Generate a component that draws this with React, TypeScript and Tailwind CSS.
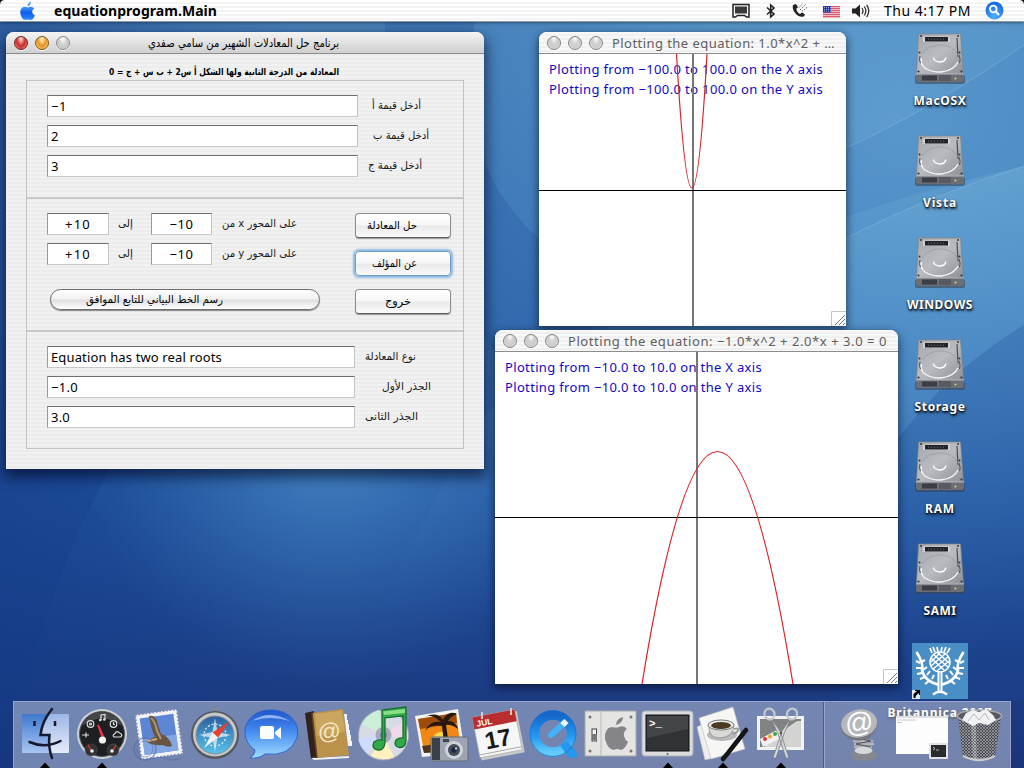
import React, { useLayoutEffect, useRef, useState } from "react";

/* Text set to an exact measure: Latin by tracking, Arabic by horizontal scale. */
function Fit({ w, text, rtl = false, className = "" }: { w: number; text: string; rtl?: boolean; className?: string }) {
  const ref = useRef<HTMLSpanElement>(null);
  const [natural, setNatural] = useState(0);
  useLayoutEffect(() => {
    if (ref.current) setNatural(ref.current.getBoundingClientRect().width);
  }, []);
  const style: React.CSSProperties = !natural
    ? {}
    : rtl
      ? { transform: `scaleX(${w / natural})` }
      : { letterSpacing: `${(w - natural) / text.length}px` };
  return (
    <span className="flex shrink-0 items-start justify-start" style={{ width: w }} dir="ltr">
      <span
        ref={ref}
        dir={rtl ? "rtl" : "ltr"}
        className={`block shrink-0 origin-left whitespace-nowrap ${rtl ? "font-['DejaVu_Sans',sans-serif]" : "font-['Noto_Sans',sans-serif]"} ${className}`}
        style={style}
      >
        {text}
      </span>
    </span>
  );
}

function Wallpaper() {
  return (
    <svg className="absolute inset-0" width="1024" height="768" viewBox="0 0 1024 768">
      <defs>
        <linearGradient id="sky" x1="0" y1="0" x2="0" y2="1">
          <stop offset="0" stopColor="#4a82ba" />
          <stop offset="0.3" stopColor="#3a72b4" />
          <stop offset="0.62" stopColor="#2559a6" />
          <stop offset="0.85" stopColor="#1c4089" />
          <stop offset="1" stopColor="#1b3479" />
        </linearGradient>
        <radialGradient id="glowR" cx="900" cy="130" r="540" gradientUnits="userSpaceOnUse">
          <stop offset="0" stopColor="#68a8d6" stopOpacity="0.75" />
          <stop offset="0.5" stopColor="#5b9fd2" stopOpacity="0.5" />
          <stop offset="1" stopColor="#4080c0" stopOpacity="0" />
        </radialGradient>
        <linearGradient id="darkL" x1="0" y1="0" x2="1" y2="0">
          <stop offset="0" stopColor="#123a86" stopOpacity="0.5" />
          <stop offset="1" stopColor="#123a86" stopOpacity="0" />
        </linearGradient>
        <linearGradient id="fadeDown" x1="0" y1="0" x2="0" y2="1">
          <stop offset="0" stopColor="#78b8de" stopOpacity="0.34" />
          <stop offset="0.75" stopColor="#4080c0" stopOpacity="0" />
        </linearGradient>
        <radialGradient id="glowM" cx="330" cy="440" r="250" gradientUnits="userSpaceOnUse">
          <stop offset="0" stopColor="#5aa2d6" stopOpacity="0.6" />
          <stop offset="1" stopColor="#3a78b8" stopOpacity="0" />
        </radialGradient>
      </defs>
      <rect width="1024" height="768" fill="url(#sky)" />
      <rect width="300" height="768" fill="url(#darkL)" />
      <rect width="1024" height="768" fill="url(#glowR)" />
      <rect width="1024" height="768" fill="url(#glowM)" />
      <path d="M385 22 Q388 180 480 330 Q520 390 540 400 L540 240 Q450 160 475 22 Z" fill="#2c62a8" opacity="0.4" />
      <path d="M325 768 Q390 560 485 414 Q700 240 1024 166 L1024 768 Z" fill="url(#fadeDown)" />
      <path d="M846 238 Q930 195 1024 166 L1024 45 Q930 110 846 148 Z" fill="#3470b6" opacity="0.14" />
      <path d="M846 238 Q930 195 1024 166 M846 148 Q930 110 1024 45" stroke="#9ccbe6" strokeWidth="1" opacity="0.3" fill="none" />
      <path d="M1024 325 Q900 400 840 540 L840 700 L1024 700 Z" fill="#1b4795" opacity="0.25" />
      <path d="M110 468 Q60 560 20 700 L0 700 L0 468 Z" fill="#123a86" opacity="0.25" />
    </svg>
  );
}

function MenuBar() {
  return (
    <header className="relative flex h-[22px] shrink-0 items-center border-b border-[#8b98a8] bg-[repeating-linear-gradient(180deg,#ffffff_0,#ffffff_2px,#f4f4f4_2px,#f4f4f4_4px)] shadow-[0_1px_3px_rgba(0,0,0,0.4)]">
      <svg className="absolute left-0 top-0" width="5" height="5"><path d="M0 0H5Q0 0 0 5Z" /></svg>
      <svg className="absolute right-0 top-0" width="5" height="5"><path d="M5 0H0Q5 0 5 5Z" /></svg>
      <svg className="ml-[19px] mr-[18px] shrink-0" width="17" height="20" viewBox="0 0 17 20">
        <defs><linearGradient id="ap" x1="0" y1="0" x2="0" y2="1"><stop offset="0" stopColor="#7db4f4" /><stop offset="0.45" stopColor="#2b7df0" /><stop offset="0.6" stopColor="#0a5ce8" /><stop offset="1" stopColor="#2e8cff" /></linearGradient></defs>
        <path d="M8.600 5.200C8.600 2.600 10 .9 12 .6 12.200 3 10.700 5 8.600 5.200ZM14.200 6.600C12.400 5 10.300 5.900 9 6.400 7.600 6.300 6.400 5.300 4.400 5.900.5 7.100.5 12.800 3.100 16.900 5.200 19.900 6.600 18.600 8.800 18.400 10.600 18.400 12 20 14 17.800 15 16.600 15.600 15.200 15.900 14.300 12.600 12.800 12.300 8.600 15.400 7.700Z" fill="url(#ap)" />
      </svg>
      <Fit w={163} text="equationprogram.Main" className="text-[14px] leading-5 font-bold text-black" />
      <div className="grow" />
      <svg className="shrink-0" width="20" height="18" viewBox="0 0 20 18">
        <path d="M2 2.500h16v12.500h-2.500l-2-1.500h-7l-2 1.500H2z" fill="#f4f4f4" stroke="#222" strokeWidth="1.500" /><rect x="4" y="4.500" width="12" height="7" fill="#3a3a3a" />
      </svg>
      <svg className="ml-[14px] shrink-0" width="12" height="16" viewBox="0 0 12 16">
        <path d="M2 4.500 9 11 5.700 14V2L9 5 2 11.500" fill="none" stroke="#222" strokeWidth="1.600" />
      </svg>
      <svg className="ml-[14px] shrink-0" width="18" height="17" viewBox="0 0 18 17">
        <path d="M2 3C.5 7 5 15.500 12 14.800 13.500 14 14 12.800 13.700 12L10.800 10.500 9 12C6.700 10.800 5.400 9 5.400 6.500L7 5.300 5 2Z" fill="#222" />
        <path d="M9 8 15 2M11 9.500 16.500 5M8 5.500 12 1.500" stroke="#555" strokeWidth="1" strokeDasharray="1.300 1.300" />
      </svg>
      <svg className="ml-[14px] mt-[2px] shrink-0" width="17" height="12" viewBox="0 0 17 12">
        <rect width="17" height="12" fill="#f4e9ec" /><path d="M0 .7h17M0 2.700h17M0 4.700h17M0 6.700h17M0 8.700h17M0 10.800h17" stroke="#d52d3f" strokeWidth="1.100" /><rect width="8" height="6.500" fill="#2335a5" /><path d="M1 1.500h7M1 3.300h7M1 5.100h7" stroke="#dde" strokeWidth=".7" strokeDasharray="1 1" />
      </svg>
      <svg className="ml-[11px] shrink-0" width="20" height="16" viewBox="0 0 20 16">
        <path d="M1 5.500H4.500L9 1.500V14.500L4.500 10.500H1Z" fill="#222" /><path d="M11 5Q13 8 11 11M13.300 3.500Q16.300 8 13.300 12.500M15.700 1.800Q19.800 8 15.700 14.200" fill="none" stroke="#333" strokeWidth="1.300" />
      </svg>
      <div className="ml-[13px]"><Fit w={87} text="Thu 4:17 PM" className="text-[14px] leading-5 text-black" /></div>
      <svg className="ml-[14px] mr-[20px] shrink-0" width="19" height="19" viewBox="0 0 19 19">
        <defs><radialGradient id="sp" cx="0.5" cy="0.8" r="0.8"><stop offset="0" stopColor="#4db0ff" /><stop offset="1" stopColor="#1460e4" /></radialGradient></defs>
        <circle cx="9.500" cy="9.500" r="9" fill="url(#sp)" /><circle cx="8.300" cy="8" r="3.300" fill="none" stroke="white" strokeWidth="1.800" /><path d="M10.800 10.600 14 13.900" stroke="white" strokeWidth="2.200" />
      </svg>
    </header>
  );
}

function Light({ color }: { color: "red" | "amber" | "gray" | "clear" }) {
  const base = "h-[14px] w-[14px] shrink-0 rounded-full border shadow-[0_1px_0_rgba(255,255,255,0.8)] ";
  const fills = {
    red: "border-[#6b2020] bg-[radial-gradient(ellipse_at_50%_15%,#ffe9e4_0,#e8837c_25%,#c62f2f_50%,#f58c80_95%)]",
    amber: "border-[#80511a] bg-[radial-gradient(ellipse_at_50%_15%,#fff6dc_0,#f3c878_25%,#e8912a_50%,#ffe36a_95%)]",
    gray: "border-[#8a8a8a] bg-[radial-gradient(ellipse_at_50%_15%,#ffffff_0,#dadada_35%,#c6c6c6_60%,#f2f2f2_100%)]",
    clear: "border-[#828282] bg-[radial-gradient(ellipse_at_50%_15%,#ffffff_0,#d2d2d2_35%,#cccccc_60%,#fafafa_100%)]",
  };
  return <span className={base + fills[color]} />;
}

function Field({ box, text, fit, center = false }: { box: string; text?: string; fit: number; center?: boolean }) {
  return (
    <div className={`flex h-[22px] shrink-0 items-center border border-t-[#6f6f6f] border-r-[#c4c4c4] border-b-[#c9c9c9] border-l-[#9b9b9b] bg-white ${center ? "justify-center" : "pl-[3px]"} ${box}`}>
      <Fit w={fit} text={text ?? ""} className="text-[13px] leading-5 text-black" />
    </div>
  );
}

function Row({ box, value, fit, label, labelW, gap }: { box: string; value: string; fit: number; label: string; labelW: number; gap: string }) {
  return (
    <div className="flex h-[22px] items-center">
      <Field box={box} text={value} fit={fit} />
      <div className={gap}><Fit rtl w={labelW} text={label} className="text-[11px] leading-5 text-[#1a1a1a]" /></div>
    </div>
  );
}

function RangeRow({ axis }: { axis: string }) {
  return (
    <div className="flex h-[22px] items-center">
      <Field box="w-[62px]" text="+10" fit={26} center />
      <div className="ml-[9px]"><Fit rtl w={15} text="إلى" className="text-[11px] leading-5 text-[#1a1a1a]" /></div>
      <div className="ml-[18px]"><Field box="w-[61px]" text="−10" fit={24} center /></div>
      <div className="ml-[10px]"><Fit rtl w={75} text={`على المحور ${axis} من`} className="text-[11px] leading-5 text-[#1a1a1a]" /></div>
    </div>
  );
}

function PushButton({ text, w, pad, focus = false }: { text: string; w: number; pad: string; focus?: boolean }) {
  return (
    <button
      className={`flex h-[25px] w-[96px] items-center rounded-[4px] border bg-[linear-gradient(180deg,#ffffff_0%,#f6f6f6_48%,#e9e9e9_52%,#fbfbfb_100%)] ${pad} ${
        focus ? "border-[#6d9cc8] shadow-[0_0_2px_2px_rgba(110,168,220,0.75)]" : "border-[#8d8d8d] border-b-[#5c5c5c] shadow-[0_1px_1px_rgba(0,0,0,0.35)]"
      }`}
    >
      <Fit rtl w={w} text={text} className="text-[11px] leading-5 text-black" />
    </button>
  );
}

const stripes = "bg-[repeating-linear-gradient(180deg,#f1f1f1_0,#f1f1f1_2px,#ececec_2px,#ececec_4px)]";

function SolverWindow() {
  return (
    <section className={`absolute left-[6px] top-[32px] flex h-[437px] w-[478px] flex-col rounded-t-[8px] shadow-[0_6px_14px_2px_rgba(0,0,20,0.6)] ${stripes}`}>
      <div className="flex h-[22px] shrink-0 items-center gap-[7px] rounded-t-[8px] border-b border-[#8c8c8c] bg-[linear-gradient(180deg,#f4f4f4,#cfcfcf)] pl-[8px]">
        <Light color="red" /><Light color="amber" /><Light color="gray" />
        <div className="ml-[71px]"><Fit rtl w={191} text="برنامج حل المعادلات الشهير من سامي صفدي" className="text-[12px] leading-5 text-black" /></div>
      </div>
      <div className="flex h-[26px] shrink-0 items-center pl-[103px] pt-[10px]">
        <Fit rtl w={230} text="المعادلة من الدرجة الثانية ولها الشكل أ س2 + ب س + ج = 0" className="text-[9.5px] leading-5 font-bold text-black" />
      </div>
      <div className="ml-[20px] flex h-[369px] w-[438px] flex-col border border-[#c2c2c2]">
        <div className="flex h-[118px] shrink-0 flex-col gap-[8px] border-b-2 border-[#c8c8c8] pl-[20px] pt-[14px]">
          <Row box="w-[311px]" value="−1" fit={16} label="أدخل قيمة أ" labelW={49} gap="ml-[14px]" />
          <Row box="w-[311px]" value="2" fit={8} label="أدخل قيمة ب" labelW={56} gap="ml-[15px]" />
          <Row box="w-[311px]" value="3" fit={8} label="أدخل قيمة ج" labelW={54} gap="ml-[10px]" />
        </div>
        <div className="flex h-[133px] shrink-0 border-b-2 border-[#c8c8c8] pl-[20px] pt-[14px]">
          <div className="flex w-[308px] flex-col gap-[8px]">
            <RangeRow axis="x" />
            <RangeRow axis="y" />
            <button className="ml-[3px] mt-[16px] flex h-[21px] w-[270px] items-center rounded-full border border-[#6e6e6e] bg-[linear-gradient(180deg,#ffffff_0%,#f0f0f0_48%,#dedede_52%,#ffffff_100%)] pl-[35px] shadow-[0_1px_1px_rgba(0,0,0,0.45)]">
              <Fit rtl w={137} text="رسم الخط البياني للتابع الموافق" className="text-[11px] leading-5 text-black" />
            </button>
          </div>
          <div className="flex flex-col gap-[13px]">
            <PushButton text="حل المعادلة" w={50} pad="pl-[11px]" />
            <PushButton text="عن المؤلف" w={45} pad="pl-[16px]" focus />
            <PushButton text="خروج" w={26} pad="pl-[29px]" />
          </div>
        </div>
        <div className="flex flex-col gap-[8px] pl-[20px] pt-[14px]">
          <Row box="w-[308px]" value="Equation has two real roots" fit={171} label="نوع المعادلة" labelW={51} gap="ml-[10px]" />
          <Row box="w-[308px]" value="−1.0" fit={27} label="الجذر الأول" labelW={49} gap="ml-[27px]" />
          <Row box="w-[308px]" value="3.0" fit={19} label="الجذر الثانى" labelW={53} gap="ml-[10px]" />
        </div>
      </div>
    </section>
  );
}

type PlotProps = {
  frame: string; title: string; titleW: number; lines: string[]; lineW: number;
  w: number; h: number; axisX: number; axisY: number; curve: string;
};

function PlotWindow({ frame, title, titleW, lines, lineW, w, h, axisX, axisY, curve }: PlotProps) {
  return (
    <section className={`absolute flex flex-col rounded-t-[8px] bg-white shadow-[0_3px_8px_1px_rgba(0,0,20,0.55)] ${frame}`}>
      <div className="flex h-[22px] shrink-0 items-center gap-[7px] rounded-t-[8px] border-b border-[#8c8c8c] bg-[repeating-linear-gradient(180deg,#f8f8f8_0,#f8f8f8_2px,#f0f0f0_2px,#f0f0f0_4px)] pl-[8px]">
        <Light color="clear" /><Light color="clear" /><Light color="clear" />
        <div className="ml-[2px]"><Fit w={titleW} text={title} className="text-[13px] leading-5 text-[#5e5e5e]" /></div>
      </div>
      <div className="relative grow pl-[10px] pt-[5px]">
        {lines.map((line) => (
          <Fit key={line} w={lineW} text={line} className="text-[13px] leading-5 text-[#1208c8]" />
        ))}
        <svg className="absolute left-0 top-0" width={w} height={h} viewBox={`0 0 ${w} ${h}`}>
          <path d={`M${axisX} 0V${h}`} stroke="#777" strokeWidth="2" />
          <path d={`M0 ${axisY}H${w}`} stroke="#000" strokeWidth="1" />
          <path d={curve} fill="none" stroke="#dd2027" strokeWidth="1.200" />
          <g transform={`translate(${w - 15} ${h - 15})`}>
            <path d="M.5 15V.5H15" fill="#fff" stroke="#c4c4c4" />
            <path d="M4 14 14 4M8 14 14 8M12 14 14 12" stroke="#777" strokeWidth="1" />
          </g>
        </svg>
      </div>
    </section>
  );
}

function Drive() {
  return (
    <svg width="54" height="54" viewBox="0 -1 54 54">
      <defs>
        <linearGradient id="dm" x1="0" y1="0" x2="1" y2="1"><stop offset="0" stopColor="#a6a8ad" /><stop offset="0.5" stopColor="#b9bbc0" /><stop offset="1" stopColor="#8e9096" /></linearGradient>
      </defs>
      <path d="M2 44H52V50Q52 52 50 52H4Q2 52 2 50Z" fill="#3c3f48" opacity=".55" />
      <path d="M5.500 2H47.500L50.500 42H3.500Z" fill="url(#dm)" stroke="#7e8187" strokeWidth=".7" />
      <path d="M3 42H51V48Q51 50 49 50H5Q3 50 3 48Z" fill="#6b6e75" />
      <path d="M9 43.500H24V48.500H9Z" fill="#3b3e44" /><path d="M27 43v6M29 43v6M31 43v6M33 43v6M35 43v6M37 43v6" stroke="#3a3c43" strokeWidth=".8" /><circle cx="42.500" cy="46.500" r="1" fill="#e2e23f" />
      <path d="M3 42H51" stroke="#d4d6da" strokeWidth=".7" />
      <path d="M10 4.500H37V10H10Z" fill="#ced0d4" /><rect x="12" y="5" width="23" height="4.500" fill="#22242a" /><path d="M15 7.200H31" stroke="#777" strokeDasharray="1 2" />
      <path d="M44 6 45 25" stroke="#4a4c52" strokeWidth="1.200" />
      <path d="M8.500 26Q7 32 12 36 19 40.500 28 40 41 38.500 45 30" fill="none" stroke="#f6f6f8" strokeWidth="1.400" />
      <path d="M9 22Q16 12 30 13 44 15 46 27" fill="none" stroke="#92949a" strokeWidth=".6" />
      <path d="M7 24Q5.500 28 7.500 31M46 23Q48 28 46.500 31" stroke="#4f5259" fill="none" strokeWidth="1" />
      <path d="M20.500 25.500Q21 29.500 26.500 30 32 30 33 25.500" fill="none" stroke="#fff" strokeWidth="1.300" />
      <g fill="#34363b"><circle cx="8" cy="4" r="1" /><circle cx="45" cy="4" r="1" /><circle cx="5.500" cy="39.500" r="1.100" /><circle cx="48.500" cy="39.500" r="1.100" /><circle cx="6.500" cy="20.500" r="1" /><circle cx="46.500" cy="20.500" r="1" /></g>
    </svg>
  );
}

function Thistle() {
  return (
    <svg width="56" height="56" viewBox="0 0 56 56">
      <rect width="56" height="56" fill="#4a8ec6" />
      <g fill="none" stroke="#fff">
        <path d="M29.500 28V50M26.500 28V50" strokeWidth="2" /><path d="M21 51.500Q28 46 35 51.500" strokeWidth="2.500" />
        <path d="M27 42Q12 38 10 27 12 21 4.500 9M29 42Q44 38 46 27 44 21 51.500 9" strokeWidth="2.600" />
        <path d="M8 20 4 18M9 25 4 25M10 30 5 31M13 34 8 36M17 38 13 41M9 19 13 17M11 27 15 24M15 32 18 28M20 36 22 32M48 20 52 18M47 25 52 25M46 30 51 31M43 34 48 36M39 38 43 41M47 19 43 17M45 27 41 24M41 32 38 28M36 36 34 32" strokeWidth="2" />
        <path d="M20 10 18 5M23 9 21 4M26 9 25 4M29 9 30 4M32 9 34 4M35 10 38 5" strokeWidth="1.700" />
        <circle cx="28" cy="19" r="10" strokeWidth="1.500" /><path d="M19 19 28 10M19 23 33 11M21 26 36 14M25 28 37 18M19 15 32 27M22 12 36 24M26 10 37 20" strokeWidth="1.500" />
      </g>
      <rect x="0" y="47" width="8" height="9" fill="#dfe9f2" /><path d="M1.500 55V51L5 48H3V47H8V52H7V50Q3.500 52 3.500 55Z" fill="#000" />
    </svg>
  );
}

const drives: [string, number][] = [["MacOSX", 53], ["Vista", 34], ["WINDOWS", 66], ["Storage", 51], ["RAM", 30], ["SAMI", 33]];
const labelClass = "text-[12px] leading-4 font-bold text-white [text-shadow:0_1px_2px_#000,1px_2px_3px_rgba(0,0,0,0.7)]";

function DesktopIcons() {
  return (
    <aside className="absolute left-[880px] top-[31px] flex w-[120px] flex-col items-center">
      {drives.map(([name, w]) => (
        <div key={name} className="flex h-[102px] flex-col items-center gap-[8px]">
          <Drive />
          <Fit w={w} text={name} className={labelClass} />
        </div>
      ))}
      <div className="flex flex-col items-center gap-[6px]">
        <Thistle />
        <Fit w={105} text="Britannica 2007" className={labelClass} />
      </div>
    </aside>
  );
}

const dockIcons: React.ReactNode[] = [
  /* Finder */
  <g>
    <defs><linearGradient id="fa" x1="0" y1="0" x2="0" y2="1"><stop offset="0" stopColor="#3f78cf" /><stop offset="1" stopColor="#a9c4f2" /></linearGradient><linearGradient id="fb" x1="0" y1="0" x2="0" y2="1"><stop offset="0" stopColor="#9db6e6" /><stop offset="1" stopColor="#e6ebfb" /></linearGradient></defs>
    <rect x="5" y="13" width="47" height="39" rx="1" fill="url(#fb)" /><path d="M5 13H33Q25 25 24 35H33Q32 45 34 52H5Z" fill="url(#fa)" />
    <path d="M35 8Q25 20 23.500 34H32.500Q31 46 35 57" fill="none" stroke="#151b2c" strokeWidth="2.500" strokeLinecap="round" /><path d="M12.500 41Q28 48 43.500 40" fill="none" stroke="#151b2c" strokeWidth="2.500" strokeLinecap="round" /><path d="M17.500 20v5M38 20v5" stroke="#151b2c" strokeWidth="2.500" />
  </g>,
  /* Dashboard */
  <g>
    <circle cx="28" cy="33" r="25" fill="#ccd0d6" /><circle cx="28" cy="33" r="22.500" fill="#1e1f22" stroke="#555" />
    <path d="M8 25Q28 10 48 25Q43 12 28 11 13 12 8 25Z" fill="#55585d" opacity=".7" />
    <circle cx="17" cy="49" r="6" fill="#333" stroke="#555" strokeWidth=".6" /><circle cx="39" cy="49" r="6" fill="#333" stroke="#555" strokeWidth=".6" /><path d="M17 49 14 44M39 49 42 44" stroke="#d33" strokeWidth="1.300" /><circle cx="18" cy="50" r="1.800" fill="#eee" /><circle cx="38" cy="50" r="1.800" fill="#eee" />
    <path d="M29 38 24 24 30 37Z" stroke="#f0324d" strokeWidth="1.800" /><circle cx="28.500" cy="39" r="3.600" fill="#f2f2f2" />
    <g fill="none" stroke="#ddd" strokeWidth="1.200"><circle cx="16.500" cy="23" r="3.300" /><circle cx="16.500" cy="23" r="1" /><circle cx="39.500" cy="23" r="3.300" /><path d="M39.500 21v2.500h1.500M8 34h7M12 31.500v5M40 36h7Q49 33 45.500 32 43 29 41 32.500 38 34 40 36ZM27 19V14L31 13.500V18.500" /></g><circle cx="26.300" cy="19" r="1.300" fill="#ddd" /><circle cx="30.300" cy="18.500" r="1.300" fill="#ddd" />
  </g>,
  /* Mail */
  <g>
    <g transform="rotate(-8 28 33)"><path d="M8 11H50V56H8Z" fill="#f4f4f7" /><path d="M8 11H50V56H8Z" fill="none" stroke="#7d88b6" strokeWidth="2" strokeDasharray="1.500 2" /><path d="M12 15H46V52H12Z" fill="#5c86d4" /><path d="M12 36H46V52H12Z" fill="#83a7e2" /></g>
    <path d="M19 15Q26 13 28 24L31 33Q40 36 42 45 38 47 33 44 24 45 17 41 20 37 25 36 21 28 19 15Z" fill="#69543f" /><path d="M21 17Q25 20 27 30L31 38" stroke="#aa987e" strokeWidth="2" fill="none" /><path d="M18 40 27 38" stroke="#d8ae65" strokeWidth="2" />
    <circle cx="15" cy="48" r="11" fill="none" stroke="#5366a2" strokeWidth="1.300" opacity=".6" /><circle cx="15" cy="48" r="8" fill="none" stroke="#5366a2" opacity=".5" /><path d="M22 58Q32 55 38 58T52 56" fill="none" stroke="#5366a2" opacity=".6" />
  </g>,
  /* Safari */
  <g>
    <defs><linearGradient id="sf" x1="0" y1="0" x2="0" y2="1"><stop offset="0" stopColor="#2a5f9f" /><stop offset="1" stopColor="#58c3ea" /></linearGradient></defs>
    <circle cx="28" cy="9.500" r="2.500" fill="none" stroke="#888" strokeWidth="1.600" /><circle cx="28" cy="34" r="24" fill="#55585e" /><circle cx="28" cy="33.500" r="22" fill="#c7cacd" /><circle cx="28" cy="34" r="19" fill="url(#sf)" stroke="#8a8d92" />
    <path d="M28 17 30.500 31 44 34 30.500 37 28 51 25.500 37 12 34 25.500 31Z" fill="#dff1fa" opacity=".75" /><circle cx="28" cy="34" r="11" fill="none" stroke="#e6f6ff" strokeWidth="1.200" strokeDasharray="2 2" /><path d="M25.500 31.500 43 20 31 36.500Z" fill="#e6402f" /><path d="M25.500 31.500 17 47 31 36.500Z" fill="#f1f1f1" />
  </g>,
  /* iChat */
  <g>
    <defs><linearGradient id="ic" x1="0" y1="0" x2="0" y2="1"><stop offset="0" stopColor="#2055cc" /><stop offset="0.45" stopColor="#468cf0" /><stop offset="1" stopColor="#a0dcff" /></linearGradient></defs>
    <path d="M28 9C12 9 2 19 2 31 2 39 6 45 12 49Q12 54 7 57 16 58 22 53 47 56 54 37C58 20 44 9 28 9Z" fill="url(#ic)" stroke="#2a62ce" /><path d="M9 20Q26 8 47 20 28 14 9 20Z" fill="#bcd8ff" opacity=".7" /><rect x="17" y="25" width="14" height="13" rx="2" fill="#fff" /><path d="M32 31 38 26V38L32 33Z" fill="#fff" />
  </g>,
  /* Address Book */
  <g>
    <path d="M5 12 14 10 18 57 11 58Z" fill="#33211d" /><path d="M11 57 49 55V57L14 59Z" fill="#eee" /><path d="M12 12 43 8 49 54 17 57Z" fill="#bb924c" /><path d="M15 13 42 9.500 45 31 17 35Z" fill="#d3b06c" opacity=".65" /><path d="M44 13h3v6h1v4h1v6h1v5h1v6h1v5h-4Z" fill="#f4f4f4" /><path d="M12 12 17 57" stroke="#60421f" strokeWidth="1.500" />
    <text x="18" y="38" fontSize="23" fill="#f3e6c4" fontFamily="Liberation Sans" transform="rotate(-6 31 33)">@</text>
  </g>,
  /* iTunes */
  <g>
    <circle cx="26.500" cy="34" r="25" fill="#d7dce4" stroke="#aab" /><path d="M26.500 34 5 23Q11 12 22 9Z" fill="#ccefda" /><path d="M26.500 34 47 20Q52 30 51 39Z" fill="#f1d9e9" /><path d="M26.500 34 14 55Q26 61 37 56Z" fill="#fff1bf" /><path d="M26.500 34 1.500 38Q3 46 9 51Z" fill="#cbdcff" /><circle cx="26.500" cy="34" r="8" fill="#a4aaba" /><circle cx="26.500" cy="34" r="3.500" fill="#7983ae" />
    <path d="M25 9 49 6V39Q49 47 42 46.500 36 45 39 39 42 36.500 46 37V15L28 17V42Q27 50 20 49 14 47 17 41 21 38 25 39Z" fill="#33a849" stroke="#11682b" strokeWidth="1.200" /><path d="M26 10.500 48 8V12L27 14Z" fill="#88df86" />
  </g>,
  /* iPhoto */
  <g>
    <path d="M2 15 45 8 52 52 9 56Z" fill="#f3f3f1" /><path d="M5 18 43 12 48 48 11 51Z" fill="#f08816" /><path d="M5 18 43 12 44 22 7 28Z" fill="#9d4c0b" /><circle cx="28" cy="39" r="8" fill="#ffd84b" /><path d="M32 50 29 25Q18 23 12 30 17 19 28 21 18 12 12 16 24 10 30 19 35 9 44 13 37 16 35 20 43 20 45 28 38 23 33 24L37 50Z" fill="#271810" />
    <path d="M9 45 48 40V50L11 52Z" fill="#50351d" /><rect x="18" y="36" width="37" height="24" rx="2" fill="#9ea5b0" stroke="#656b78" /><rect x="19" y="37" width="8" height="22" fill="#3c4048" /><circle cx="41" cy="49" r="9" fill="#d0d4da" /><circle cx="41" cy="49" r="6" fill="#454c59" /><circle cx="41" cy="49" r="2.700" fill="#1b2947" /><circle cx="43" cy="47.500" r="1" fill="#fff" /><rect x="30" y="38" width="6" height="3" fill="#444" />
  </g>,
  /* iCal */
  <g>
    <g transform="rotate(-11 28 34)"><rect x="7" y="14" width="44" height="42" fill="#c8c8c8" /><rect x="6" y="12" width="43" height="41" fill="#f6f6f6" stroke="#aaa" strokeWidth=".6" /><path d="M6 12H49V24H6Z" fill="#b92d30" /><path d="M6 50H49" stroke="#aaa" /><text x="9" y="22" fontSize="8.500" fontWeight="bold" fill="#fff" fontFamily="Liberation Sans">JUL</text><text x="14" y="46" fontSize="24" fontWeight="bold" fill="#191919" fontFamily="Liberation Sans">17</text></g>
    <path d="M12 11v7M41 7v7" stroke="#ccc" strokeWidth="2" />
  </g>,
  /* QuickTime */
  <g>
    <defs><linearGradient id="qt" x1="0" y1="0" x2="0" y2="1"><stop offset="0" stopColor="#1467c9" /><stop offset="0.6" stopColor="#249af2" /><stop offset="1" stopColor="#62cafa" /></linearGradient></defs>
    <circle cx="27" cy="32.500" r="18.500" fill="none" stroke="url(#qt)" strokeWidth="9.500" /><path d="M34 44 41 40 50 50 52 56 43 57Z" fill="#2697ee" /><circle cx="27" cy="32.500" r="23" fill="none" stroke="#1b70cf" strokeWidth=".8" /><path d="M25 34 38 22" stroke="#43b1f7" strokeWidth="6" strokeLinecap="round" /><path d="m36.500 24 4-4" stroke="#e8f6ff" strokeWidth="6" />
  </g>,
  /* System Preferences */
  <g>
    <rect x="2" y="10" width="51" height="45" fill="#e4e4e2" stroke="#aaa" /><path d="M18 10v45" stroke="#bbb" /><path d="M36 26Q41 24 44 28 40 31 41 35 42 39 45 41 42 48 38 49 34 47 31 49 25 49 22 38 21 27 29 26 32 27 36 26ZM33 24Q33 18 40 16 40 22 33 24Z" fill="#848489" /><rect x="9" y="28" width="4.500" height="12" fill="#f5f5f5" stroke="#444" /><path d="M9 33h5v6H9Z" fill="#777" /><g fill="#7c756d"><circle cx="7" cy="16" r="1.500" /><circle cx="48" cy="16" r="1.500" /><circle cx="7" cy="50" r="1.500" /><circle cx="48" cy="50" r="1.500" /></g>
  </g>,
  /* Terminal */
  <g>
    <rect x="2" y="10" width="51" height="45" rx="3" fill="#dcdcdf" stroke="#b1b3bb" /><rect x="6" y="14" width="43" height="36" fill="#303235" stroke="#111" /><path d="M7 15H48V28L7 37Z" fill="#55575a" opacity=".5" /><circle cx="27.500" cy="53" r="1" fill="#666" /><text x="9" y="26" fontSize="11" fontWeight="bold" fill="#fff" fontFamily="Liberation Mono">&gt;_</text>
  </g>,
  /* Java text editor */
  <g>
    <path d="M1 26 12 20 26 55 9 59Z" fill="#eee" stroke="#bbb" strokeWidth=".5" /><path d="M3 17 37 6 49 48 15 58Z" fill="#f6f6f4" stroke="#bbb" strokeWidth=".6" /><ellipse cx="26" cy="34" rx="15" ry="6" fill="#b8b8b8" /><path d="M13 25Q12 37 24 37 37 36 38 25Z" fill="#d8d8d6" stroke="#777" strokeWidth=".6" /><ellipse cx="25" cy="24" rx="13" ry="5" fill="#eee" stroke="#777" /><ellipse cx="25" cy="24.500" rx="10" ry="3.500" fill="#4b3a23" /><path d="M38 28Q44 26 41 31L37 33" fill="none" stroke="#999" strokeWidth="2" /><path d="M50 29 32 52 27 58" stroke="#151515" strokeWidth="4.500" strokeLinecap="round" />
  </g>,
  /* Grab */
  <g>
    <rect x="4" y="15" width="47" height="34" fill="#f2f2f2" /><rect x="7" y="18" width="41" height="28" fill="#7f8383" /><path d="M12 42 44 20H48V46H12Z" fill="#d3d4d2" /><path d="M7 38 24 29 28 37 10 46Z" fill="#f1f1f1" /><circle cx="12" cy="38" r="2" fill="#dc3737" /><circle cx="17" cy="35.500" r="2" fill="#e7a32a" /><circle cx="22" cy="33" r="2" fill="#44a346" />
    <path d="M18 17 27 30 36 57 33 57 25 33ZM38 17 29 30 20 57 23 57 31 33Z" fill="#d4d6da" stroke="#74777e" strokeWidth=".7" /><ellipse cx="16.500" cy="13" rx="5" ry="5.500" fill="none" stroke="#c6c8cd" strokeWidth="2.300" transform="rotate(-25 16.500 13)" /><ellipse cx="39" cy="13" rx="5" ry="5.500" fill="none" stroke="#c6c8cd" strokeWidth="2.300" transform="rotate(25 39 13)" /><circle cx="28" cy="32" r="1.300" fill="#555" />
  </g>,
];

const sideIcons: React.ReactNode[] = [
  /* Web link spring */
  <g>
    <path d="M19 40h20M20 43h20M20 46h18" stroke="#b2b5bb" strokeWidth="2.500" /><path d="M17 56Q17 47 29 47 42 47 43 56 38 60 30 60 21 60 17 56Z" fill="#85888f" /><ellipse cx="29.500" cy="49.500" rx="9" ry="3.500" fill="#d5d7db" /><path d="M22 37 37 40 22 43 37 46" fill="none" stroke="#555" strokeWidth="1" /><ellipse cx="25" cy="24.500" rx="18" ry="15" fill="#74777e" transform="rotate(-10 25 24)" /><ellipse cx="25" cy="22.500" rx="18" ry="14" fill="#b6b8bd" transform="rotate(-10 25 22)" /><text x="11" y="31" fontSize="28" fill="#fff" fontFamily="Liberation Sans" transform="rotate(-6 25 22)">@</text>
  </g>,
  /* Minimized terminal window */
  <g><rect x="3" y="15" width="52" height="38" fill="#fdfdfd" /><path d="M3 15H55V17H3Z" fill="#dfdfdf" /><path d="M4 19H23M4 21.500H9" stroke="#bbb" strokeWidth=".8" /><rect x="36" y="42" width="19" height="16" rx="1" fill="#e2e2e4" /><rect x="38" y="44" width="15" height="12" fill="#292b2e" /><path d="m40 46 2 1.500-2 1.500M43 49h3" stroke="#ddd" fill="none" strokeWidth=".8" /></g>,
  /* Trash */
  <g>
    <defs><pattern id="mesh" width="3" height="3" patternUnits="userSpaceOnUse"><path d="M0 0 3 3M3 0 0 3" stroke="#a9acb2" strokeWidth=".7" /></pattern></defs>
    <path d="M7 15H50L44 56Q28 63 12 56Z" fill="#44474d" /><path d="M7 15H50L44 56Q28 63 12 56Z" fill="url(#mesh)" /><path d="M20 22H25L26 58H22Z" fill="#e1e3e6" opacity=".3" /><ellipse cx="28.500" cy="15" rx="22" ry="6" fill="#555860" stroke="#a5a8ad" strokeWidth="1.600" /><path d="M11 19 15 12 22 9 28 11 35 8 42 14 45 19 37 24 28 22 22 25Z" fill="#f1f1f3" /><path d="M17 20 23 13 28 19 34 12 38 19" fill="none" stroke="#b6b9bf" /><path d="M12 55Q28 63 44 55" fill="none" stroke="#c7c9cd" strokeWidth="2.500" />
  </g>,
];

const running = [0, 1, 11, 12, 13];
const runningX: Record<number, number> = { 12: 27 };

function Dock() {
  return (
    <footer className="absolute bottom-0 left-[13px] flex h-[67px] w-[998px] border border-b-0 border-[#98a4cc] bg-[#ffffff63]">
      <div className="flex w-[810px] shrink-0 border-r border-[#4c5a94] pl-[3px]">
        {dockIcons.map((icon, i) => (
          <svg key={i} className="block w-[56.6px] shrink-0" height="66" viewBox="0 0 56.6 66">
            <g transform="translate(0 -1)">{icon}</g>
            {running.includes(i) && <path d="M0 60.500 5 66H-5Z" fill="#000" transform={`translate(${runningX[i] ?? 28} 0)`} />}
          </svg>
        ))}
      </div>
      <div className="flex grow border-l border-[#98a4cc] pl-[9px]">
        {sideIcons.map((icon, i) => (
          <svg key={i} className="block w-[58.5px] shrink-0" height="66" viewBox="0 0 58.5 66"><g transform="translate(0 -1)">{icon}</g></svg>
        ))}
      </div>
    </footer>
  );
}

export default function App() {
  return (
    <main className="relative flex h-[768px] w-[1024px] flex-col overflow-hidden bg-[#2a5ca5]">
      <Wallpaper />
      <MenuBar />
      <DesktopIcons />
      <SolverWindow />
      <PlotWindow
        frame="left-[539px] top-[32px] h-[294px] w-[307px]"
        title="Plotting the equation: 1.0*x^2 + …" titleW={223}
        lines={["Plotting from −100.0 to 100.0 on the X axis", "Plotting from −100.0 to 100.0 on the Y axis"]} lineW={274}
        w={307} h={272} axisX={154} axisY={136.5} curve="M137.500 0Q153 268 168 0"
      />
      <PlotWindow
        frame="left-[495px] top-[330px] h-[354px] w-[403px]"
        title="Plotting the equation: −1.0*x^2 + 2.0*x + 3.0 = 0" titleW={319}
        lines={["Plotting from −10.0 to 10.0 on the X axis", "Plotting from −10.0 to 10.0 on the Y axis"]} lineW={257}
        w={403} h={332} axisX={202} axisY={165.5} curve="M147 332Q222.500 -133 298 332"
      />
      <Dock />
    </main>
  );
}
